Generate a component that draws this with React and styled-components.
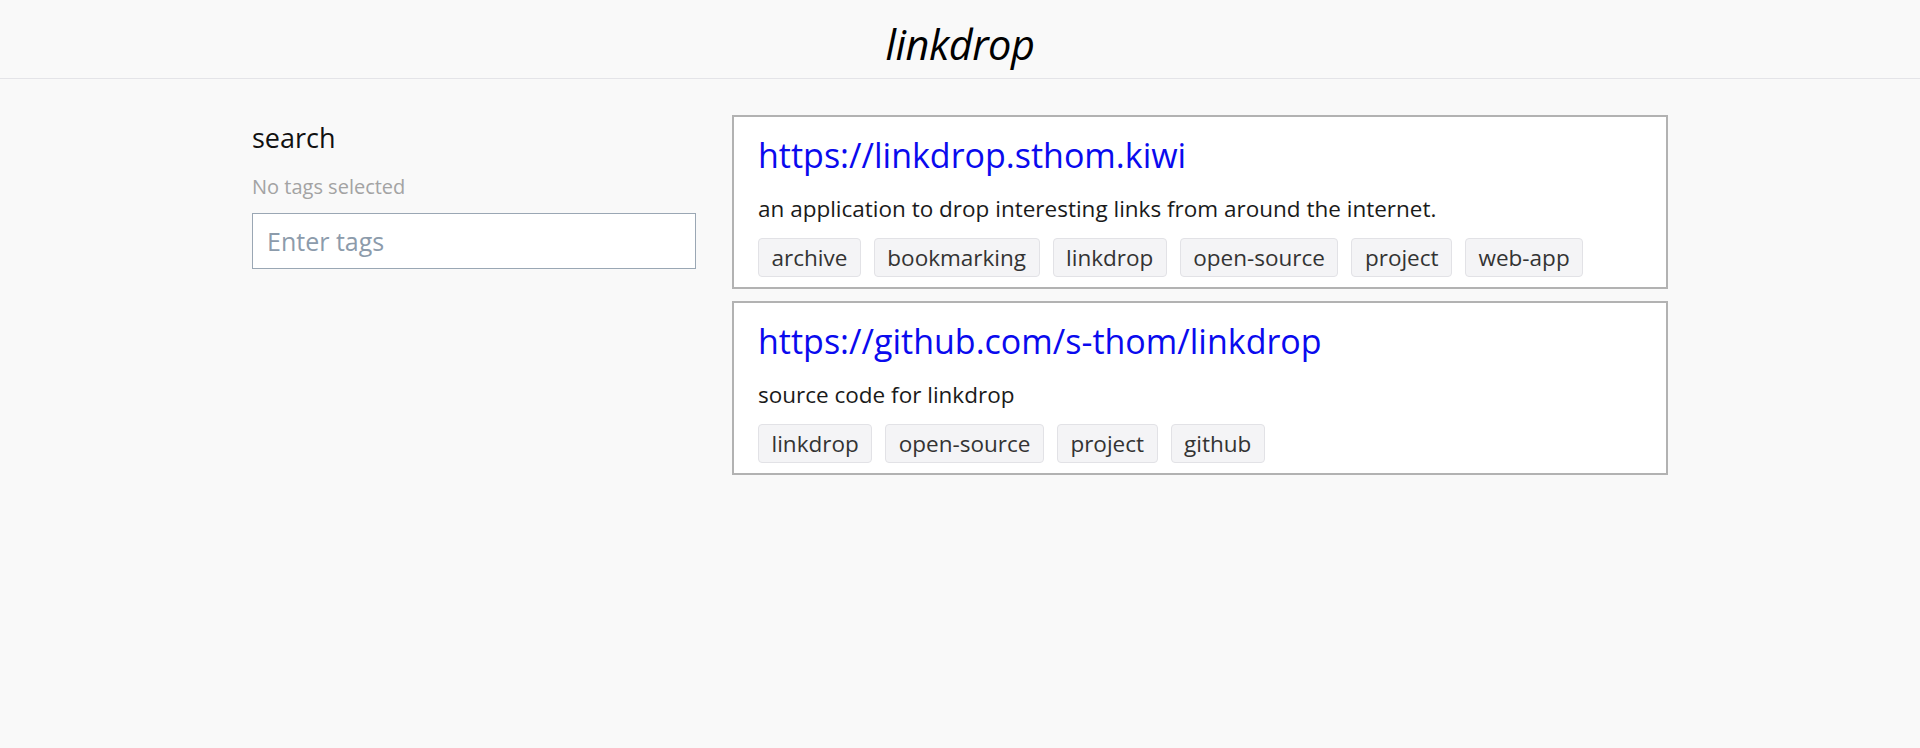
import React from "react"
import styled, { createGlobalStyle } from "styled-components"

const links = [
    {
        url: "https://linkdrop.sthom.kiwi",
        description: "an application to drop interesting links from around the internet.",
        tags: ["archive", "bookmarking", "linkdrop", "open-source", "project", "web-app"],
    },
    {
        url: "https://github.com/s-thom/linkdrop",
        description: "source code for linkdrop",
        tags: ["linkdrop", "open-source", "project", "github"],
    },
]

const App = () => {
    return (
        <>
            <GlobalStyle />
            <Header>
                <Title>linkdrop</Title>
            </Header>

            <Main>
                <Sidebar>
                    <SearchHeading>search</SearchHeading>
                    <Hint>No tags selected</Hint>
                    <TagInput placeholder="Enter tags" />
                </Sidebar>

                <LinkList>
                    {links.map((link) => (
                        <Card key={link.url}>
                            <LinkUrl href={link.url}>{link.url}</LinkUrl>
                            <Description>{link.description}</Description>
                            <Tags>
                                {link.tags.map((tag) => (
                                    <Tag key={tag}>{tag}</Tag>
                                ))}
                            </Tags>
                        </Card>
                    ))}
                </LinkList>
            </Main>
        </>
    )
}

export default App

// Style
const GlobalStyle = createGlobalStyle`
    html, body {
        margin: 0;
        background-color: #f9f9f9;
        font-family: "Open Sans", "Noto Sans", sans-serif;
        color: #111;
    }
`

const Header = styled.header`
    height: 79px;
    padding-top: 9px;
    box-sizing: border-box;
    display: flex;
    align-items: center;
    justify-content: center;
    border-bottom: 1px solid #e4e4e8;
`

const Title = styled.h1`
    margin: 0;
    font-size: 41.5px;
    font-weight: 400;
    font-style: italic;
    color: #000;
    letter-spacing: -0.5px;
`

const Main = styled.main`
    display: grid;
    grid-template-columns: 444px 936px;
    gap: 36px;
    justify-content: center;
    padding-top: 36px;
`

const Sidebar = styled.aside`
    display: flex;
    flex-direction: column;
`

const SearchHeading = styled.h2`
    margin: 0;
    font-size: 27px;
    font-weight: 400;
    line-height: 45px;
    color: #111;
`

const Hint = styled.p`
    margin: 12px 0 11px;
    font-size: 20px;
    line-height: 30px;
    color: #a3a3a3;
`

const TagInput = styled.input`
    box-sizing: border-box;
    height: 56px;
    width: 100%;
    padding: 0 14px;
    border: 1px solid #9aa7b4;
    background: #fff;
    font-family: inherit;
    font-size: 25px;
    outline: none;

    &::placeholder {
        color: #8c9bab;
    }
`

const LinkList = styled.section`
    display: flex;
    flex-direction: column;
    gap: 12px;
`

const Card = styled.article`
    box-sizing: border-box;
    height: 174px;
    padding: 14px 24px 0;
    background-color: #fff;
    border: 2px solid #b2b2b2;
`

const LinkUrl = styled.a`
    display: block;
    font-size: 34px;
    line-height: 48px;
    color: #0a0aee;
    text-decoration: none;
`

const Description = styled.p`
    margin: 15px 0 14px;
    font-size: 22.5px;
    line-height: 30px;
    color: #1a1a1a;
`

const Tags = styled.div`
    display: flex;
    gap: 13px;
`

const Tag = styled.span`
    box-sizing: border-box;
    height: 39px;
    padding: 0 12.5px;
    display: flex;
    align-items: center;
    background-color: #f4f4f6;
    border: 1px solid #e2e2e6;
    border-radius: 4px;
    font-size: 22.5px;
    color: #333;
`
